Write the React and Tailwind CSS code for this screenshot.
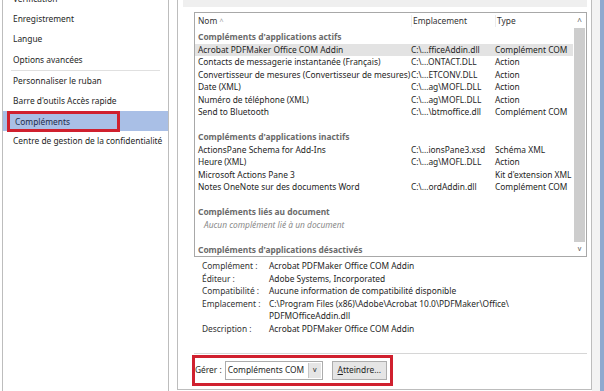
import React from "react";

/* ---------- Data ---------- */
const NAV = [
  { label: "Vérification" },
  { label: "Enregistrement" },
  { label: "Langue" },
  { label: "Options avancées", sep: true },
  { label: "Personnaliser le ruban" },
  { label: "Barre d'outils Accès rapide" },
  { label: "Compléments", active: true },
  { label: "Centre de gestion de la confidentialité" },
];

const ROWS = [
  { cat: "Compléments d'applications actifs" },
  { name: "Acrobat PDFMaker Office COM Addin", loc: "C:\\...fficeAddin.dll", type: "Complément COM", sel: true },
  { name: "Contacts de messagerie instantanée (Français)", loc: "C:\\...ONTACT.DLL", type: "Action" },
  { name: "Convertisseur de mesures (Convertisseur de mesures)", loc: "C:\\...ETCONV.DLL", type: "Action" },
  { name: "Date (XML)", loc: "C:\\...ag\\MOFL.DLL", type: "Action" },
  { name: "Numéro de téléphone (XML)", loc: "C:\\...ag\\MOFL.DLL", type: "Action" },
  { name: "Send to Bluetooth", loc: "C:\\...\\btmoffice.dll", type: "Complément COM" },
  { blank: true },
  { cat: "Compléments d'applications inactifs" },
  { name: "ActionsPane Schema for Add-Ins", loc: "C:\\...ionsPane3.xsd", type: "Schéma XML" },
  { name: "Heure (XML)", loc: "C:\\...ag\\MOFL.DLL", type: "Action" },
  { name: "Microsoft Actions Pane 3", loc: "", type: "Kit d'extension XML" },
  { name: "Notes OneNote sur des documents Word", loc: "C:\\...ordAddin.dll", type: "Complément COM" },
  { blank: true },
  { cat: "Compléments liés au document" },
  { note: "Aucun complément lié à un document" },
  { blank: true },
  { cat: "Compléments d'applications désactivés" },
];

const DETAILS = [
  ["Complément :", "Acrobat PDFMaker Office COM Addin"],
  ["Éditeur :", "Adobe Systems, Incorporated"],
  ["Compatibilité :", "Aucune information de compatibilité disponible"],
  ["Emplacement :", "C:\\Program Files (x86)\\Adobe\\Acrobat 10.0\\PDFMaker\\Office\\\nPDFMOfficeAddin.dll"],
  ["Description :", "Acrobat PDFMaker Office COM Addin"],
];

/* ---------- Components ---------- */
const ListRow = ({ row }) => {
  if (row.blank) return <div className="h-[12.5px]" />;
  if (row.cat)
    return (
      <div className="h-[12.5px] leading-[12.5px] pl-[3px] font-bold text-[#6b6b6b] whitespace-nowrap">
        {row.cat}
      </div>
    );
  if (row.note)
    return (
      <div className="h-[12.5px] leading-[12.5px] pl-[9px] italic text-[#8a8a8a]">
        {row.note}
      </div>
    );
  return (
    <div
      className={`flex h-[12.5px] leading-[12.5px] whitespace-nowrap ${
        row.sel ? "bg-[#e3e3e3]" : ""
      }`}
    >
      <span className="w-[216px] pl-[3px] overflow-hidden">{row.name}</span>
      <span className="w-[84px]">{row.loc}</span>
      <span className="flex-1">{row.type}</span>
    </div>
  );
};

export default function App() {
  return (
    <div
      className="w-[604px] h-[391px] overflow-hidden flex bg-white text-[8.4px] text-[#1e1e1e]"
      style={{ fontFamily: '"Noto Sans", "Open Sans", sans-serif' }}
    >
      {/* Sidebar */}
      <aside className="w-[167px] ml-[2px] border-x border-[#bdbdbd] flex flex-col -mt-[11px] whitespace-nowrap">
        {NAV.map((item) => (
          <div key={item.label}>
            <div
              className={`h-[20.2px] leading-[20px] pl-[10px] ${
                item.active ? "bg-[#a9bfe6]" : ""
              }`}
            >
              <span
                className={
                  item.active
                    ? "inline-block h-[21px] w-[113px] -ml-[6px] pl-[5px] border-[3px] border-[#d0202e] leading-[15px] text-[#1f2d4a]"
                    : ""
                }
              >
                {item.label}
              </span>
            </div>
            {item.sep && <div className="mx-[8px] h-px bg-[#e0e0e0]" />}
          </div>
        ))}
      </aside>

      {/* Main */}
      <main className="w-[415px] ml-[8px] border-x border-b border-[#bdbdbd] h-[390px] flex flex-col pl-[5px] pr-[4px]">
        <div className="h-[8px] bg-[#efefef] w-[404px] -mt-px" />

        {/* List */}
        <div className="mt-[5px] ml-[11px] w-[393px] h-[245px] border border-[#a8a8a8] flex">
          <div className="flex-1 flex flex-col min-w-0">
            <div className="flex h-[18px] items-center whitespace-nowrap text-[#333]">
              <span className="w-[216px] pl-[3px]">
                Nom <span className="text-[#999] text-[7px]">^</span>
              </span>
              <span className="w-[84px] pl-px border-l border-[#ececec]">Emplacement</span>
              <span className="flex-1 border-l border-[#ececec] pl-px">Type</span>
            </div>
            <div className="pt-[2px]">
              {ROWS.map((row, i) => (
                <ListRow key={i} row={row} />
              ))}
            </div>
          </div>
          {/* Scrollbar */}
          <div className="w-[13px] flex flex-col items-center bg-white">
            <div className="h-[15px] flex items-center text-[8px] text-[#555]">^</div>
            <div className="w-[11px] flex-1 bg-[#cdcdcd]" />
            <div className="h-[14px] flex items-center text-[7px] text-[#555]">v</div>
          </div>
        </div>

        {/* Details */}
        <div className="ml-[19px] mt-[3px] flex flex-col">
          {DETAILS.map(([k, v]) => (
            <div key={k} className="flex leading-[12.6px]">
              <span className="w-[67px] shrink-0 text-[#333]">{k}</span>
              <span className="whitespace-pre">{v}</span>
            </div>
          ))}
        </div>

        <div className="mt-auto ml-[11px] w-[393px] h-px bg-[#d6d6d6]" />

        {/* Bottom bar */}
        <div className="ml-[9px] mt-px mb-[3px] w-[201px] h-[31px] border-[3px] border-[#d0202e] flex items-center gap-[3px]">
          <span>Gérer :</span>
          <div className="h-[19px] w-[98px] border border-[#acacac] flex items-center justify-between pl-[2px]">
            <span className="whitespace-nowrap">Compléments COM</span>
            <span className="h-[15px] w-[13px] mr-px bg-[#e5e5e5] border-l border-[#c5c5c5] flex items-center justify-center text-[7px]">
              v
            </span>
          </div>
          <button className="ml-[6px] h-[19px] w-[55px] border border-[#adadad] bg-[#e5e5e5] text-[8.4px]">
            <span className="underline">A</span>tteindre...
          </button>
        </div>
      </main>

      {/* Window edge */}
      <div className="w-[8px] bg-[#f3f3f3]" />
      <div className="w-[4px] bg-[#8fa9cf]" />
    </div>
  );
}
